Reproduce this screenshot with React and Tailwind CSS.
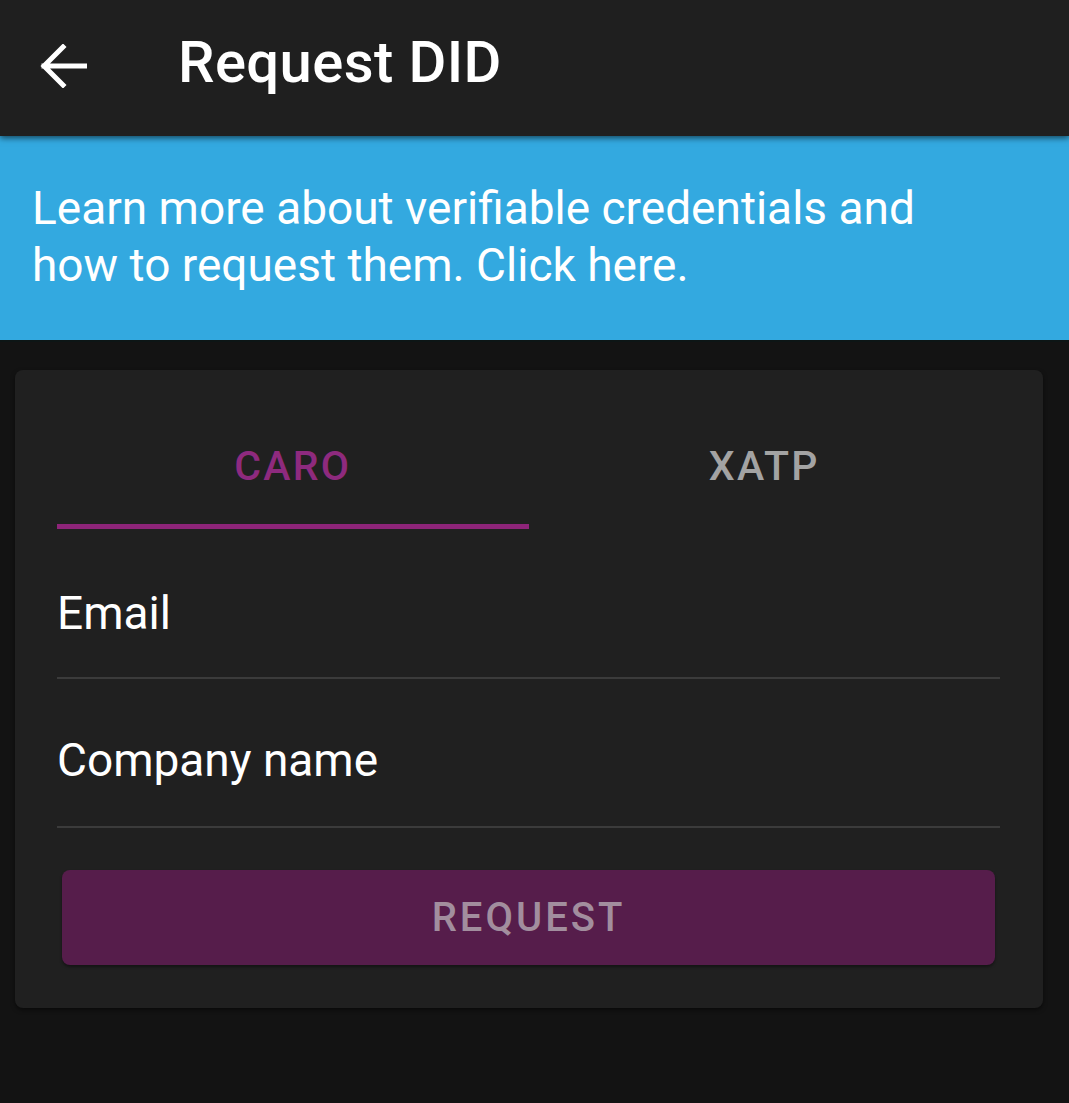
import React, { useState } from "react";

const ArrowBack = () => (
  <svg width="48" height="44" viewBox="0 0 48 44" fill="none">
    <path
      d="M46 22H5M24 3L5 22l19 19"
      stroke="white"
      strokeWidth="5"
      strokeLinecap="square"
      strokeLinejoin="miter"
    />
  </svg>
);

const App = () => {
  const [tab, setTab] = useState("caro");

  return (
    <div
      className="min-h-[1103px] w-[1069px] bg-[#131313] text-white"
      style={{ fontFamily: "Roboto, 'Noto Sans', sans-serif" }}
    >
      <header className="relative z-10 flex h-[136px] items-center bg-[#1f1f1f] shadow-[0_2px_6px_rgba(0,0,0,0.6)]">
        <button className="ml-[39px] -mt-[4px] flex h-[48px] w-[48px] items-center justify-center">
          <ArrowBack />
        </button>
        <h1 className="ml-[91px] -mt-[12px] text-[58px] font-medium leading-none tracking-[0.4px]">
          Request DID
        </h1>
      </header>

      <div className="flex h-[206px] items-center border-b-[2px] border-[#0d1515] bg-[#33a9e0] pl-[32px] pr-[110px]">
        <p className="-mt-[2px] text-[46px] leading-[57px] text-white">
          Learn more about verifiable credentials and how to request them. Click
          here.
        </p>
      </div>

      <div className="ml-[15px] mt-[28px] w-[1028px] rounded-[8px] bg-[#202020] px-[42px] pb-[43px] pt-[30px] shadow-[0_2px_4px_rgba(0,0,0,0.5)]">
        <div className="flex w-[943px]">
          {[
            ["caro", "CARO"],
            ["xatp", "XATP"],
          ].map(([id, label]) => (
            <button
              key={id}
              onClick={() => setTab(id)}
              className={`flex h-[129px] flex-1 flex-col items-center justify-end ${
                tab === id ? "text-[#8e2a7e]" : "text-[#a3a3a3]"
              }`}
            >
              <span className="mb-[37px] text-[41px] font-medium leading-none tracking-[2.3px]">
                {label}
              </span>
              <span
                className={`h-[5px] w-full ${
                  tab === id ? "bg-[#8e2479]" : "bg-transparent"
                }`}
              />
            </button>
          ))}
        </div>

        <div className="flex h-[150px] w-[943px] items-end border-b-[2px] border-[#3b3b3b]">
          <span className="mb-[41px] text-[46px] leading-none">Email</span>
        </div>
        <div className="flex h-[149px] w-[943px] items-end border-b-[2px] border-[#3b3b3b]">
          <span className="mb-[43px] text-[46px] leading-none">Company name</span>
        </div>

        <button className="ml-[5px] mt-[42px] flex h-[95px] w-[933px] items-center justify-center rounded-[8px] bg-[#561d4b] shadow-[0_2px_3px_rgba(0,0,0,0.4)]">
          <span className="text-[40px] font-medium leading-none tracking-[3px] text-[#a28e9e]">
            REQUEST
          </span>
        </button>
      </div>
    </div>
  );
};

export default App;
